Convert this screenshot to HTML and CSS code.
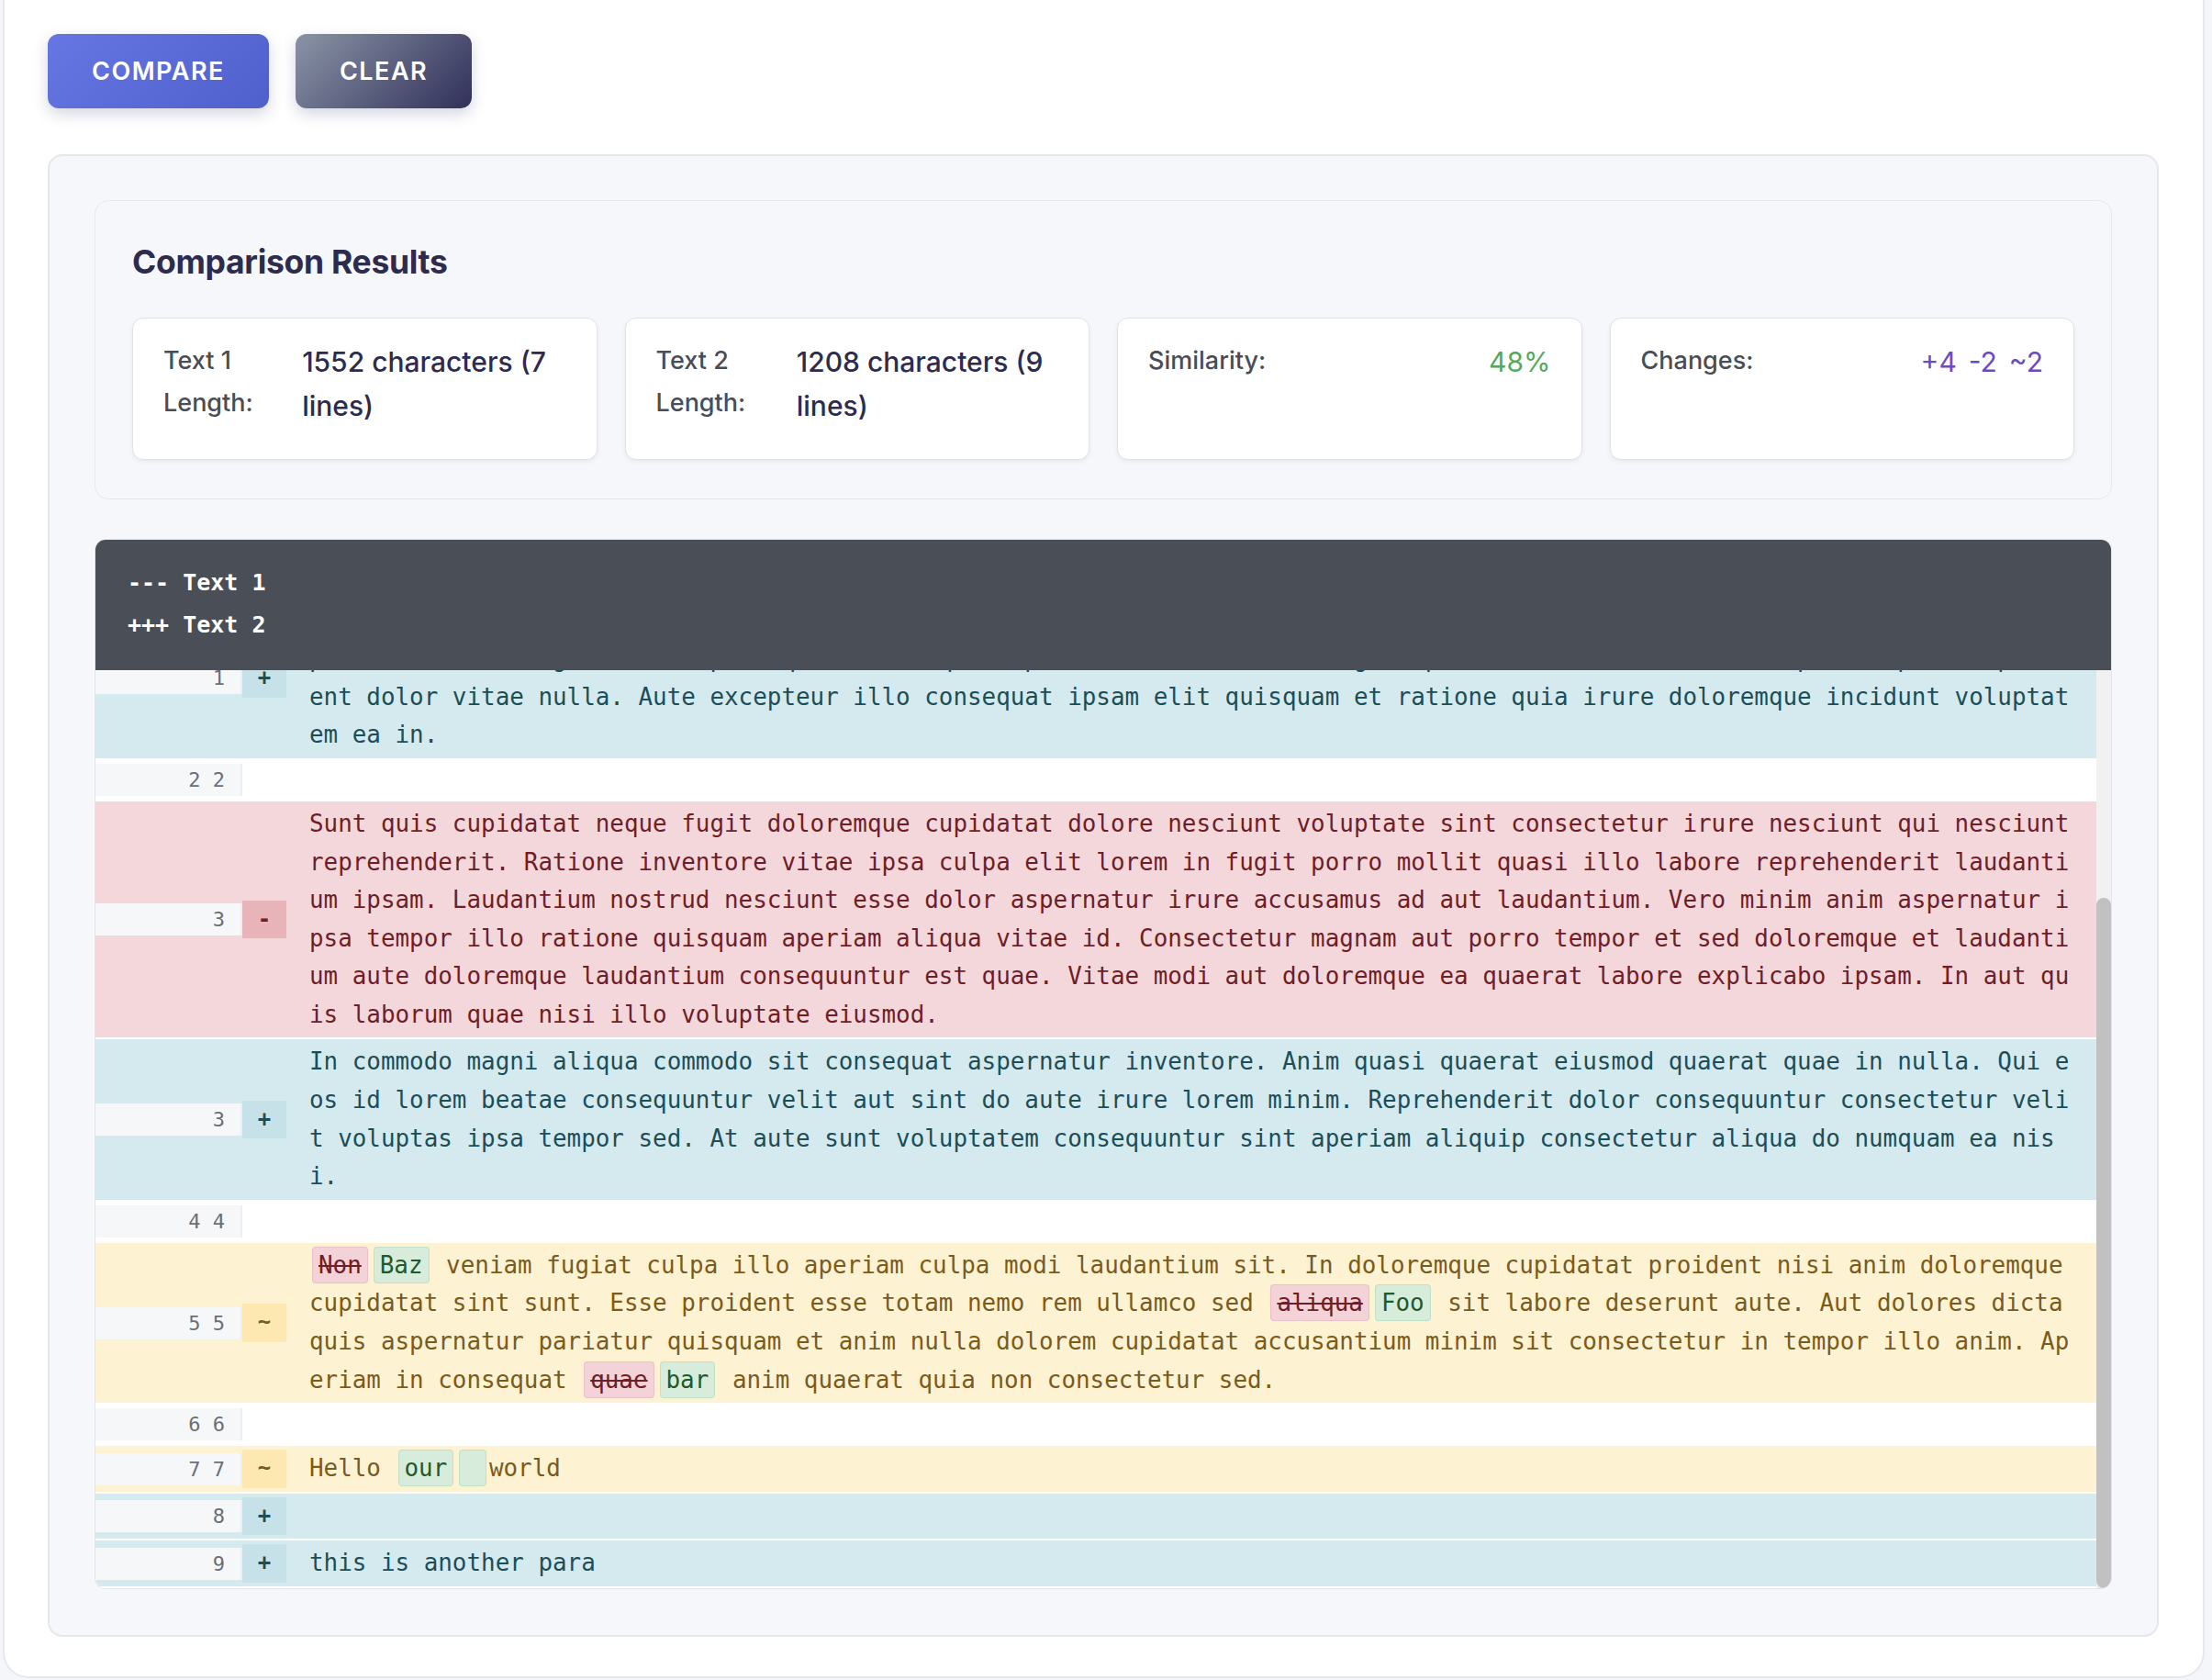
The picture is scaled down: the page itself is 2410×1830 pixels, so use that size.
FILE: index.html
```html
<!DOCTYPE html>
<html lang="en">
<head>
<meta charset="utf-8">
<title>Text Compare</title>
<link rel="stylesheet" href="styles.css">
</head>
<body>
<div class="app">
  <div class="actions">
    <button class="btn btn-compare">COMPARE</button>
    <button class="btn btn-clear">CLEAR</button>
  </div>
  <section class="panel">
    <div class="results">
      <h2 class="results-title">Comparison Results</h2>
      <div class="stats">
        <div class="stat">
          <span class="stat-label">Text 1 Length:</span>
          <span class="stat-value">1552 characters (7 lines)</span>
        </div>
        <div class="stat">
          <span class="stat-label">Text 2 Length:</span>
          <span class="stat-value">1208 characters (9 lines)</span>
        </div>
        <div class="stat">
          <span class="stat-label">Similarity:</span>
          <span class="stat-value sim">48%</span>
        </div>
        <div class="stat">
          <span class="stat-label">Changes:</span>
          <span class="stat-value changes"><span>+4</span><span>-2</span><span>~2</span></span>
        </div>
      </div>
    </div>
    <div class="diff">
      <div class="diff-header">
        <div>--- Text 1</div>
        <div>+++ Text 2</div>
      </div>
      <div class="diff-body">
        <div class="diff-viewport">
          <div class="diff-rows">
            <div class="row hunk"><span class="ln"></span><span class="mk"></span><div class="code">@@ -1,7 +1,9 @@</div></div>
            <div class="row del"><span class="ln">1</span><span class="mk">-</span><div class="code">Dolore magna aliqua ut enim ad minim veniam quis nostrud exercitation ullamco laboris nisi ut aliquip ex ea commodo consequat. Duis aute irure dolor in reprehenderit in voluptate velit esse cillum dolore eu fugiat nulla pariatur. Excepteur sint occaecat cupidatat non proident, sunt in culpa qui officia deserunt mollit anim id est laborum. Sed ut perspiciatis unde omnis iste natus error sit voluptatem accusantium doloremque laudantium totam rem.</div></div>
            <div class="row add"><span class="ln">1</span><span class="mk">+</span><div class="code">Aute proident voluptate consequat dolore laboris magna quis irure aliquip eiusmod tempor ratione quisquam dolorem veniam cupidatat labore magnam sed, ipsum quaerat aliqua explicabo nostrud amet fugiat porro sunt anim. Quasi tempor culpa sit proident dolor vitae nulla. Aute excepteur illo consequat ipsam elit quisquam et ratione quia irure doloremque incidunt voluptatem ea in.</div></div>
            <div class="row ctx"><span class="ln">2 2</span><span class="mk"></span><div class="code"></div></div>
            <div class="row del"><span class="ln">3</span><span class="mk">-</span><div class="code">Sunt quis cupidatat neque fugit doloremque cupidatat dolore nesciunt voluptate sint consectetur irure nesciunt qui nesciunt reprehenderit. Ratione inventore vitae ipsa culpa elit lorem in fugit porro mollit quasi illo labore reprehenderit laudantium ipsam. Laudantium nostrud nesciunt esse dolor aspernatur irure accusamus ad aut laudantium. Vero minim anim aspernatur ipsa tempor illo ratione quisquam aperiam aliqua vitae id. Consectetur magnam aut porro tempor et sed doloremque et laudantium aute doloremque laudantium consequuntur est quae. Vitae modi aut doloremque ea quaerat labore explicabo ipsam. In aut quis laborum quae nisi illo voluptate eiusmod.</div></div>
            <div class="row add"><span class="ln">3</span><span class="mk">+</span><div class="code">In commodo magni aliqua commodo sit consequat aspernatur inventore. Anim quasi quaerat eiusmod quaerat quae in nulla. Qui eos id lorem beatae consequuntur velit aut sint do aute irure lorem minim. Reprehenderit dolor consequuntur consectetur velit voluptas ipsa tempor sed. At aute sunt voluptatem consequuntur sint aperiam aliquip consectetur aliqua do numquam ea nisi.</div></div>
            <div class="row ctx"><span class="ln">4 4</span><span class="mk"></span><div class="code"></div></div>
            <div class="row mod"><span class="ln">5 5</span><span class="mk">~</span><div class="code"><del>Non</del><ins>Baz</ins> veniam fugiat culpa illo aperiam culpa modi laudantium sit. In doloremque cupidatat proident nisi anim doloremque cupidatat sint sunt. Esse proident esse totam nemo rem ullamco sed <del>aliqua</del><ins>Foo</ins> sit labore deserunt aute. Aut dolores dicta quis aspernatur pariatur quisquam et anim nulla dolorem cupidatat accusantium minim sit consectetur in tempor illo anim. Aperiam in consequat <del>quae</del><ins>bar</ins> anim quaerat quia non consectetur sed.</div></div>
            <div class="row ctx"><span class="ln">6 6</span><span class="mk"></span><div class="code"></div></div>
            <div class="row mod"><span class="ln">7 7</span><span class="mk">~</span><div class="code">Hello <ins>our</ins><ins> </ins>world</div></div>
            <div class="row add"><span class="ln">8</span><span class="mk">+</span><div class="code"></div></div>
            <div class="row add"><span class="ln">9</span><span class="mk">+</span><div class="code">this is another para</div></div>
          </div>
        </div>
        <div class="scrollbar"><div class="thumb"></div></div>
      </div>
    </div>
  </section>
</div>
</body>
</html>
```

FILE: styles.css
```css
* { box-sizing: border-box; }

html, body {
  margin: 0;
  padding: 0;
}

body {
  background: #f5f6f9;
  font-family: "Inter", "Noto Sans", sans-serif;
  color: #2d2b4e;
}

.app {
  margin-left: 3px;
  width: 2399px;
  background: #ffffff;
  border: 2px solid #e6e8ee;
  border-top: 0;
  border-radius: 0 0 28px 28px;
  padding: 37px 48px 43px 47px;
}

.actions {
  display: flex;
  gap: 29px;
}

.btn {
  height: 81px;
  padding: 0 48px;
  border: 0;
  border-radius: 12px;
  color: #ffffff;
  font-family: "Inter", "Noto Sans", sans-serif;
  font-weight: 600;
  font-size: 27px;
  letter-spacing: 1.5px;
  box-shadow: 0 6px 16px rgba(60, 70, 120, 0.22);
  cursor: pointer;
}

.btn-compare {
  background: linear-gradient(135deg, #6676e2 0%, #4f5fcb 100%);
}

.btn-clear {
  background: linear-gradient(135deg, #8a94a6 0%, #31305a 100%);
}

.panel {
  margin-top: 50px;
  background: #f6f7fa;
  border: 2px solid #e4e7ec;
  border-radius: 16px;
  padding: 48px 49px 50px 49px;
}

.results {
  background: #f6f7fa;
  border: 1px solid #e6e8ed;
  border-radius: 15px;
  padding: 45px 40px 42px 40px;
}

.results-title {
  margin: 0 0 39px 0;
  font-size: 35.5px;
  line-height: 43px;
  font-weight: 700;
  color: #2d2b4e;
  letter-spacing: -0.3px;
}

.stats {
  display: grid;
  grid-template-columns: repeat(4, 1fr);
  gap: 30px;
}

.stat {
  display: flex;
  justify-content: space-between;
  align-items: flex-start;
  background: #ffffff;
  border: 1px solid #e0e2e6;
  border-radius: 12px;
  box-shadow: 0 2px 5px rgba(0, 0, 0, 0.06);
  padding: 23px 33px 34px 33px;
  min-height: 155px;
}

.stat-label {
  font-size: 27px;
  line-height: 46px;
  font-weight: 500;
  color: #4a4d57;
  margin-right: 5px;
}

.stat-value {
  font-size: 30px;
  line-height: 48px;
  font-weight: 500;
  color: #2d2b4e;
}

.stat-value.sim {
  color: #55a95a;
  font-weight: 400;
}

.stat-value.changes {
  color: #6a4bc4;
  font-weight: 400;
  display: flex;
}

.stat-value.changes span + span {
  margin-left: 13px;
}

.diff {
  margin-top: 43px;
  background: #ffffff;
  border: 1px solid #e1e4e8;
  border-radius: 12px;
  overflow: hidden;
}

.diff-header {
  background: #4a4e57;
  color: #ffffff;
  font-family: "DejaVu Sans Mono", "Liberation Mono", monospace;
  font-weight: 700;
  font-size: 25px;
  line-height: 46px;
  padding: 24px 36px 26px 35px;
}

.diff-body {
  display: flex;
  height: 1000px;
  background: #ffffff;
}

.diff-viewport {
  flex: 1;
  min-width: 0;
  overflow: hidden;
  display: flex;
  flex-direction: column;
  justify-content: flex-end;
}

.diff-rows {
  flex-shrink: 0;
}

.scrollbar {
  flex: none;
  width: 16px;
  background: #f1f1f1;
  display: flex;
  flex-direction: column;
  justify-content: flex-end;
}

.thumb {
  height: 752px;
  background: #c1c1c1;
  border-radius: 8px;
}

.row {
  display: flex;
  align-items: center;
  padding: 4px 0;
  margin-bottom: 2px;
  font-family: "DejaVu Sans Mono", "Liberation Mono", monospace;
}

.ln {
  flex: none;
  width: 160px;
  height: 35px;
  line-height: 35px;
  padding-right: 17px;
  text-align: right;
  font-size: 22px;
  color: #6b6f76;
  background: #f6f7f9;
  border-right: 2px solid #eceef1;
  white-space: pre;
}

.mk {
  flex: none;
  width: 48px;
  height: 41.6px;
  line-height: 41.6px;
  text-align: center;
  font-size: 24px;
  font-weight: 700;
}

.code {
  flex: 1;
  min-width: 0;
  padding: 0 18px 0 25px;
  font-size: 25.9px;
  line-height: 41.6px;
  white-space: pre-wrap;
  word-break: break-all;
}

.ctx .mk {
  height: auto;
}

.hunk {
  padding: 16px 0;
  background: #eef1f6;
  color: #6b6f76;
}

.add { background: #d5eaee; }
.add .mk { background: #c6e2e8; color: #1b4e58; }
.add .code { color: #1b4e58; }

.del { background: #f3d7da; }
.del .mk { background: #e8b4ba; color: #6f1d27; }
.del .code { color: #6f1d27; }

.mod { background: #fdf2d2; }
.mod .mk { background: #fce8b0; color: #7a5b1c; }
.mod .code { color: #7a5b1c; }

.code del,
.code ins {
  margin: 0 3px;
  padding: 4px 6px;
  border-radius: 4px;
  border: 1px solid transparent;
}

.code del {
  background: #f3d3d7;
  border-color: #ebc0c6;
  color: #6f1d27;
  text-decoration: line-through;
}

.code ins {
  background: #d7ecdb;
  border-color: #c0e0c8;
  color: #1d5a2c;
  text-decoration: none;
}
```
